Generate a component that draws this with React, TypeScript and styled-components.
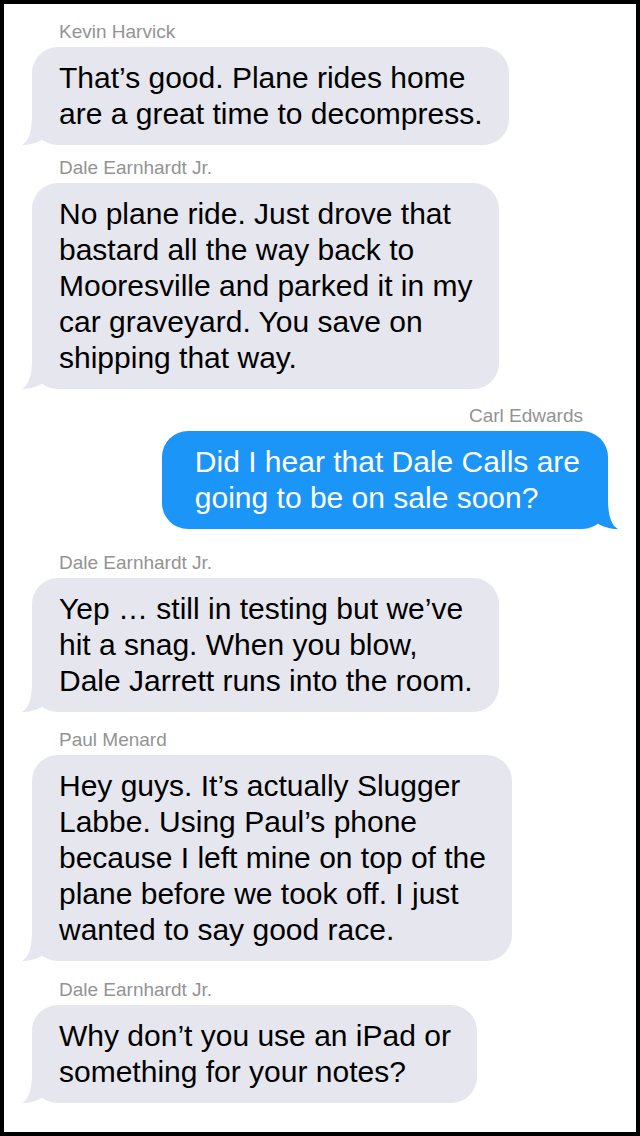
import React from "react";
import styled, { createGlobalStyle } from "styled-components";

const Global = createGlobalStyle`
  html, body { margin: 0; padding: 0; background: #000; }
  body { font-family: "Liberation Sans", Arial, Helvetica, sans-serif; }
`;

const Frame = styled.div`
  width: 640px;
  height: 1136px;
  box-sizing: border-box;
  border: 4px solid #000;
  background: #fff;
  overflow: hidden;
`;

const Thread = styled.div`
  display: flex;
  flex-direction: column;
  padding: 17px 28px 0 28px;
`;

const Group = styled.div<{ $me?: boolean; $space: number }>`
  display: flex;
  flex-direction: column;
  align-items: ${(p) => (p.$me ? "flex-end" : "flex-start")};
  margin-top: ${(p) => p.$space}px;
`;

const Name = styled.div<{ $me?: boolean }>`
  font-size: 19px;
  line-height: 22px;
  color: #939393;
  margin: 0 ${(p) => (p.$me ? "25px" : "0")} 4px ${(p) => (p.$me ? "0" : "27px")};
`;

const Bubble = styled.div<{ $me?: boolean }>`
  position: relative;
  box-sizing: border-box;
  padding: 13px ${(p) => (p.$me ? "28px" : "26px")} 13px ${(p) => (p.$me ? "33px" : "27px")};
  border-radius: 26px;
  background: ${(p) => (p.$me ? "#1b95f8" : "#e5e6ee")};
  color: ${(p) => (p.$me ? "#fff" : "#000")};
  font-size: 30px;
  line-height: 36px;
  white-space: nowrap;
`;

const Tail = styled.svg<{ $me?: boolean }>`
  position: absolute;
  bottom: 0;
  width: 30px;
  height: 30px;
  ${(p) => (p.$me ? "right: -10px; transform: scaleX(-1);" : "left: -10px;")}
  z-index: 0;
`;

const Text = styled.div`
  position: relative;
  z-index: 1;
`;

type Msg = { name: string; me?: boolean; space: number; lines: string[] };

const messages: Msg[] = [
  {
    name: "Kevin Harvick",
    space: 0,
    lines: ["That’s good. Plane rides home", "are a great time to decompress."],
  },
  {
    name: "Dale Earnhardt Jr.",
    space: 12,
    lines: [
      "No plane ride. Just drove that",
      "bastard all the way back to",
      "Mooresville and parked it in my",
      "car graveyard. You save on",
      "shipping that way.",
    ],
  },
  {
    name: "Carl Edwards",
    me: true,
    space: 16,
    lines: ["Did I hear that Dale Calls are", "going to be on sale soon?"],
  },
  {
    name: "Dale Earnhardt Jr.",
    space: 23,
    lines: [
      "Yep … still in testing but we’ve",
      "hit a snag. When you blow,",
      "Dale Jarrett runs into the room.",
    ],
  },
  {
    name: "Paul Menard",
    space: 17,
    lines: [
      "Hey guys. It’s actually Slugger",
      "Labbe. Using Paul’s phone",
      "because I left mine on top of the",
      "plane before we took off. I just",
      "wanted to say good race.",
    ],
  },
  {
    name: "Dale Earnhardt Jr.",
    space: 18,
    lines: ["Why don’t you use an iPad or", "something for your notes?"],
  },
];

export default function App() {
  return (
    <>
      <Global />
      <Frame>
        <Thread>
          {messages.map((m, i) => (
            <Group key={i} $me={m.me} $space={m.space}>
              <Name $me={m.me}>{m.name}</Name>
              <Bubble $me={m.me}>
                <Tail $me={m.me} viewBox="0 0 30 30" aria-hidden="true">
                  <path
                    d="M10 0 C10 16 7 26 0 30 C7 30 15 28 21 24 L21 0 Z"
                    fill={m.me ? "#1b95f8" : "#e5e6ee"}
                  />
                </Tail>
                <Text>
                  {m.lines.map((l, j) => (
                    <div key={j}>{l}</div>
                  ))}
                </Text>
              </Bubble>
            </Group>
          ))}
        </Thread>
      </Frame>
    </>
  );
}
